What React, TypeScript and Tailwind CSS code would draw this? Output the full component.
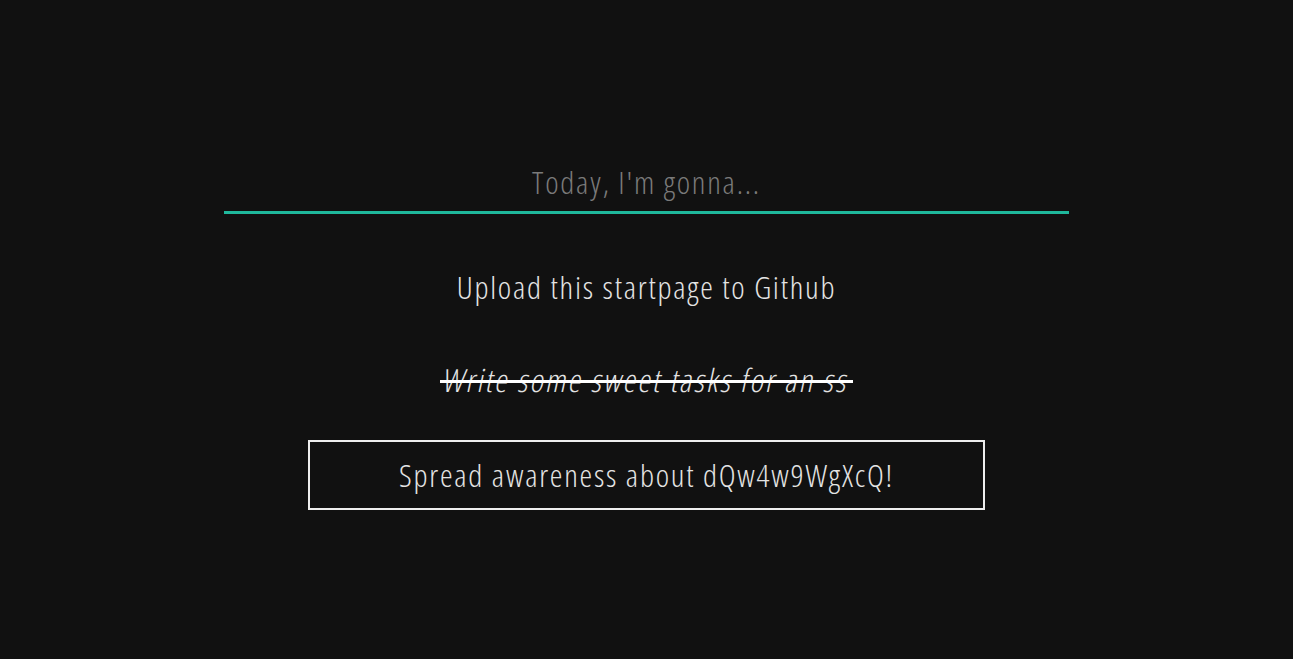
export default function App() {
  return (
    <div
      className="min-h-screen bg-[#111111] pt-[152px] flex flex-col items-center text-[#e4e4e4]"
      style={{ fontFamily: "'Open Sans', sans-serif" }}
    >
      {/* Input */}
      <input
        type="text"
        placeholder="Today, I'm gonna..."
        className="w-[845px] h-[62px] bg-transparent border-b-[3px] border-[#1fb89c] text-center text-[32px] font-light font-stretch-condensed tracking-[1.75px] text-[#e4e4e4] placeholder:text-[#7a7a7a] outline-none"
      />

      {/* Tasks */}
      <ul className="mt-[38px] flex flex-col items-center gap-6 text-[32px] font-light font-stretch-condensed tracking-[1.75px]">
        <li className="h-[70px] flex items-center px-[90px]">Upload this startpage to Github</li>
        <li className="h-[70px] flex items-center px-[90px]">
          <span className="relative px-1 -mt-[3px]">
            <span className="inline-block -skew-x-[12deg] tracking-[2.15px]">Write some sweet tasks for an ss</span>
            <span className="absolute left-0 right-0 top-1/2 h-[3px] bg-white" />
          </span>
        </li>
        <li className="h-[70px] flex items-center px-[89px] border-2 border-[#eeeeee]">
          Spread awareness about dQw4w9WgXcQ!
        </li>
      </ul>
    </div>
  );
}
